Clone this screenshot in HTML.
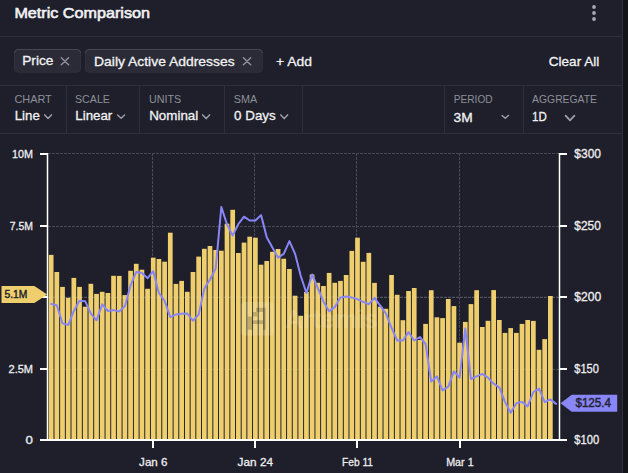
<!DOCTYPE html>
<html><head><meta charset="utf-8"><style>
html,body{margin:0;padding:0;background:#131418;width:628px;height:473px;overflow:hidden;}
svg{display:block;font-family:"Liberation Sans",sans-serif;}
</style></head><body>
<svg width="628" height="473" viewBox="0 0 628 473" font-family="Liberation Sans, sans-serif"><rect x="0" y="0" width="628" height="473" fill="#131418"/>
<rect x="0" y="0" width="622" height="473" fill="#1e1f2a"/>
<rect x="622" y="0" width="1" height="473" fill="#2e2e3c"/>
<text x="14.4" y="18" font-size="15" font-weight="normal" fill="#f2f2f4" text-anchor="start" textLength="135.6" lengthAdjust="spacingAndGlyphs" stroke="#f2f2f4" stroke-width="0.6">Metric Comparison</text>
<circle cx="594" cy="7" r="1.9" fill="#a5a7b1"/>
<circle cx="594" cy="13" r="1.9" fill="#a5a7b1"/>
<circle cx="594" cy="19" r="1.9" fill="#a5a7b1"/>
<rect x="0" y="36" width="622" height="1" fill="#2e2e3c"/>
<rect x="14.5" y="49.5" width="66.0" height="22.700000000000003" rx="3.5" fill="#2a2b36" stroke="#30313c" stroke-width="1"/><path d="M14.5 53.0 A3.5 3.5 0 0 1 18.0 49.5 H77.0 A3.5 3.5 0 0 1 80.5 53.0" fill="none" stroke="#464753" stroke-width="1"/>
<text x="22.2" y="65.2" font-size="13.5" font-weight="normal" fill="#f2f2f4" text-anchor="start" textLength="31.2" lengthAdjust="spacingAndGlyphs"  stroke="#f2f2f4" stroke-width="0.3">Price</text>
<path d="M61.3 57.7L68.6 64.7M68.6 57.7L61.3 64.7" stroke="#8f9099" stroke-width="1.5" stroke-linecap="round"/>
<rect x="85.5" y="49.5" width="176.8" height="22.700000000000003" rx="3.5" fill="#2a2b36" stroke="#30313c" stroke-width="1"/><path d="M85.5 53.0 A3.5 3.5 0 0 1 89.0 49.5 H258.8 A3.5 3.5 0 0 1 262.3 53.0" fill="none" stroke="#464753" stroke-width="1"/>
<text x="94.1" y="65.5" font-size="13.5" font-weight="normal" fill="#f2f2f4" text-anchor="start" textLength="140.5" lengthAdjust="spacingAndGlyphs"  stroke="#f2f2f4" stroke-width="0.3">Daily Active Addresses</text>
<path d="M243.4 57.7L250.7 64.7M250.7 57.7L243.4 64.7" stroke="#8f9099" stroke-width="1.5" stroke-linecap="round"/>
<text x="276" y="65.7" font-size="13.5" font-weight="normal" fill="#f2f2f4" text-anchor="start" textLength="36" lengthAdjust="spacingAndGlyphs"  stroke="#f2f2f4" stroke-width="0.3">+ Add</text>
<text x="548.8" y="65.8" font-size="13.5" font-weight="normal" fill="#f2f2f4" text-anchor="start" textLength="50.4" lengthAdjust="spacingAndGlyphs"  stroke="#f2f2f4" stroke-width="0.3">Clear All</text>
<rect x="0" y="85" width="622" height="1" fill="#2e2e3c"/>
<rect x="0" y="133" width="622" height="1" fill="#2e2e3c"/>
<rect x="66" y="86" width="1" height="47" fill="#2e2e3c"/>
<rect x="139" y="86" width="1" height="47" fill="#2e2e3c"/>
<rect x="224" y="86" width="1" height="47" fill="#2e2e3c"/>
<rect x="302" y="86" width="1" height="47" fill="#2e2e3c"/>
<rect x="444" y="86" width="1" height="47" fill="#2e2e3c"/>
<rect x="523" y="86" width="1" height="47" fill="#2e2e3c"/>
<text x="14.4" y="102.9" font-size="11" font-weight="normal" fill="#8d8f99" text-anchor="start" textLength="37.4" lengthAdjust="spacingAndGlyphs" >CHART</text>
<text x="14.700000000000001" y="119.9" font-size="13.5" font-weight="normal" fill="#f2f2f4" text-anchor="start" textLength="25.1" lengthAdjust="spacingAndGlyphs"  stroke="#f2f2f4" stroke-width="0.3">Line</text>
<polyline points="44.7,114.89999999999999 48.05,118.5 51.4,114.89999999999999" fill="none" stroke="#9c9da5" stroke-width="1.5" stroke-linecap="round" stroke-linejoin="round"/>
<text x="75.0" y="102.9" font-size="11" font-weight="normal" fill="#8d8f99" text-anchor="start" textLength="34.9" lengthAdjust="spacingAndGlyphs" >SCALE</text>
<text x="75.3" y="119.8" font-size="13.5" font-weight="normal" fill="#f2f2f4" text-anchor="start" textLength="37.0" lengthAdjust="spacingAndGlyphs"  stroke="#f2f2f4" stroke-width="0.3">Linear</text>
<polyline points="117.6,115.0 121.1,118.2 124.60000000000001,115.0" fill="none" stroke="#9c9da5" stroke-width="1.5" stroke-linecap="round" stroke-linejoin="round"/>
<text x="148.9" y="102.9" font-size="11" font-weight="normal" fill="#8d8f99" text-anchor="start" textLength="32.3" lengthAdjust="spacingAndGlyphs" >UNITS</text>
<text x="149.20000000000002" y="119.8" font-size="13.5" font-weight="normal" fill="#f2f2f4" text-anchor="start" textLength="49.1" lengthAdjust="spacingAndGlyphs"  stroke="#f2f2f4" stroke-width="0.3">Nominal</text>
<polyline points="202.7,114.89999999999999 206.14999999999998,118.60000000000001 209.6,114.89999999999999" fill="none" stroke="#9c9da5" stroke-width="1.5" stroke-linecap="round" stroke-linejoin="round"/>
<text x="233.8" y="102.9" font-size="11" font-weight="normal" fill="#8d8f99" text-anchor="start" textLength="23.4" lengthAdjust="spacingAndGlyphs" >SMA</text>
<text x="234.10000000000002" y="119.8" font-size="13.5" font-weight="normal" fill="#f2f2f4" text-anchor="start" textLength="41.6" lengthAdjust="spacingAndGlyphs"  stroke="#f2f2f4" stroke-width="0.3">0 Days</text>
<polyline points="280.8,114.89999999999999 284.2,118.60000000000001 287.59999999999997,114.89999999999999" fill="none" stroke="#9c9da5" stroke-width="1.5" stroke-linecap="round" stroke-linejoin="round"/>
<text x="453.8" y="102.8" font-size="11" font-weight="normal" fill="#8d8f99" text-anchor="start" textLength="38.8" lengthAdjust="spacingAndGlyphs" >PERIOD</text>
<text x="453.6" y="121.6" font-size="13.5" font-weight="normal" fill="#f2f2f4" text-anchor="start" textLength="19.1" lengthAdjust="spacingAndGlyphs"  stroke="#f2f2f4" stroke-width="0.3">3M</text>
<polyline points="502.1,115.5 505.25,118.30000000000001 508.4,115.5" fill="none" stroke="#9c9da5" stroke-width="1.5" stroke-linecap="round" stroke-linejoin="round"/>
<text x="532.1" y="102.9" font-size="11" font-weight="normal" fill="#8d8f99" text-anchor="start" textLength="64.9" lengthAdjust="spacingAndGlyphs" >AGGREGATE</text>
<text x="532.1" y="120.9" font-size="13.5" font-weight="normal" fill="#f2f2f4" text-anchor="start" textLength="14.7" lengthAdjust="spacingAndGlyphs"  stroke="#f2f2f4" stroke-width="0.3">1D</text>
<polyline points="565.6,115.6 570.0,120.30000000000001 574.4,115.6" fill="none" stroke="#9c9da5" stroke-width="1.8" stroke-linecap="round" stroke-linejoin="round"/>
<line x1="48" y1="153.5" x2="559" y2="153.5" stroke="#474957" stroke-width="1" stroke-dasharray="3 1"/>
<line x1="48" y1="226.5" x2="559" y2="226.5" stroke="#474957" stroke-width="1" stroke-dasharray="3 1"/>
<line x1="48" y1="297.5" x2="559" y2="297.5" stroke="#474957" stroke-width="1" stroke-dasharray="3 1"/>
<line x1="48" y1="369.5" x2="559" y2="369.5" stroke="#474957" stroke-width="1" stroke-dasharray="3 1"/>
<line x1="152.5" y1="153" x2="152.5" y2="439" stroke="#474957" stroke-width="1" stroke-dasharray="3 1"/>
<line x1="254.5" y1="153" x2="254.5" y2="439" stroke="#474957" stroke-width="1" stroke-dasharray="3 1"/>
<line x1="356.5" y1="153" x2="356.5" y2="439" stroke="#474957" stroke-width="1" stroke-dasharray="3 1"/>
<line x1="459.5" y1="153" x2="459.5" y2="439" stroke="#474957" stroke-width="1" stroke-dasharray="3 1"/>
<rect x="48.80" y="254.9" width="4.7" height="184.10" fill="#efcf6d"/>
<rect x="54.47" y="272" width="4.7" height="167.00" fill="#efcf6d"/>
<rect x="60.15" y="286.9" width="4.7" height="152.10" fill="#efcf6d"/>
<rect x="65.82" y="297.8" width="4.7" height="141.20" fill="#efcf6d"/>
<rect x="71.49" y="277.9" width="4.7" height="161.10" fill="#efcf6d"/>
<rect x="77.16" y="286.9" width="4.7" height="152.10" fill="#efcf6d"/>
<rect x="82.84" y="306.7" width="4.7" height="132.30" fill="#efcf6d"/>
<rect x="88.51" y="283.8" width="4.7" height="155.20" fill="#efcf6d"/>
<rect x="94.18" y="293.9" width="4.7" height="145.10" fill="#efcf6d"/>
<rect x="99.86" y="291.8" width="4.7" height="147.20" fill="#efcf6d"/>
<rect x="105.53" y="293" width="4.7" height="146.00" fill="#efcf6d"/>
<rect x="111.20" y="275.8" width="4.7" height="163.20" fill="#efcf6d"/>
<rect x="116.88" y="275.9" width="4.7" height="163.10" fill="#efcf6d"/>
<rect x="122.55" y="295.1" width="4.7" height="143.90" fill="#efcf6d"/>
<rect x="128.22" y="270.8" width="4.7" height="168.20" fill="#efcf6d"/>
<rect x="133.89" y="263.8" width="4.7" height="175.20" fill="#efcf6d"/>
<rect x="139.57" y="269.7" width="4.7" height="169.30" fill="#efcf6d"/>
<rect x="145.24" y="288.8" width="4.7" height="150.20" fill="#efcf6d"/>
<rect x="150.91" y="257.7" width="4.7" height="181.30" fill="#efcf6d"/>
<rect x="156.59" y="259" width="4.7" height="180.00" fill="#efcf6d"/>
<rect x="162.26" y="261.7" width="4.7" height="177.30" fill="#efcf6d"/>
<rect x="167.93" y="232.7" width="4.7" height="206.30" fill="#efcf6d"/>
<rect x="173.61" y="283.9" width="4.7" height="155.10" fill="#efcf6d"/>
<rect x="179.28" y="280.9" width="4.7" height="158.10" fill="#efcf6d"/>
<rect x="184.95" y="291.8" width="4.7" height="147.20" fill="#efcf6d"/>
<rect x="190.62" y="272" width="4.7" height="167.00" fill="#efcf6d"/>
<rect x="196.30" y="256.6" width="4.7" height="182.40" fill="#efcf6d"/>
<rect x="201.97" y="248.8" width="4.7" height="190.20" fill="#efcf6d"/>
<rect x="207.64" y="246" width="4.7" height="193.00" fill="#efcf6d"/>
<rect x="213.32" y="250" width="4.7" height="189.00" fill="#efcf6d"/>
<rect x="218.99" y="250.7" width="4.7" height="188.30" fill="#efcf6d"/>
<rect x="224.66" y="223.7" width="4.7" height="215.30" fill="#efcf6d"/>
<rect x="230.34" y="209.8" width="4.7" height="229.20" fill="#efcf6d"/>
<rect x="236.01" y="253" width="4.7" height="186.00" fill="#efcf6d"/>
<rect x="241.68" y="242.6" width="4.7" height="196.40" fill="#efcf6d"/>
<rect x="247.36" y="236.7" width="4.7" height="202.30" fill="#efcf6d"/>
<rect x="253.03" y="237.7" width="4.7" height="201.30" fill="#efcf6d"/>
<rect x="258.70" y="264.7" width="4.7" height="174.30" fill="#efcf6d"/>
<rect x="264.37" y="261" width="4.7" height="178.00" fill="#efcf6d"/>
<rect x="270.05" y="251.8" width="4.7" height="187.20" fill="#efcf6d"/>
<rect x="275.72" y="249" width="4.7" height="190.00" fill="#efcf6d"/>
<rect x="281.39" y="258.7" width="4.7" height="180.30" fill="#efcf6d"/>
<rect x="287.07" y="269" width="4.7" height="170.00" fill="#efcf6d"/>
<rect x="292.74" y="295.7" width="4.7" height="143.30" fill="#efcf6d"/>
<rect x="298.41" y="315.8" width="4.7" height="123.20" fill="#efcf6d"/>
<rect x="304.08" y="291.9" width="4.7" height="147.10" fill="#efcf6d"/>
<rect x="309.76" y="274.5" width="4.7" height="164.50" fill="#efcf6d"/>
<rect x="315.43" y="282.8" width="4.7" height="156.20" fill="#efcf6d"/>
<rect x="321.10" y="286" width="4.7" height="153.00" fill="#efcf6d"/>
<rect x="326.78" y="272.9" width="4.7" height="166.10" fill="#efcf6d"/>
<rect x="332.45" y="282.8" width="4.7" height="156.20" fill="#efcf6d"/>
<rect x="338.12" y="280.9" width="4.7" height="158.10" fill="#efcf6d"/>
<rect x="343.80" y="275" width="4.7" height="164.00" fill="#efcf6d"/>
<rect x="349.47" y="250.9" width="4.7" height="188.10" fill="#efcf6d"/>
<rect x="355.14" y="237.7" width="4.7" height="201.30" fill="#efcf6d"/>
<rect x="360.81" y="261.8" width="4.7" height="177.20" fill="#efcf6d"/>
<rect x="366.49" y="252.9" width="4.7" height="186.10" fill="#efcf6d"/>
<rect x="372.16" y="282.9" width="4.7" height="156.10" fill="#efcf6d"/>
<rect x="377.83" y="306.7" width="4.7" height="132.30" fill="#efcf6d"/>
<rect x="383.51" y="308.8" width="4.7" height="130.20" fill="#efcf6d"/>
<rect x="389.18" y="275" width="4.7" height="164.00" fill="#efcf6d"/>
<rect x="394.85" y="294.8" width="4.7" height="144.20" fill="#efcf6d"/>
<rect x="400.53" y="320.2" width="4.7" height="118.80" fill="#efcf6d"/>
<rect x="406.20" y="291" width="4.7" height="148.00" fill="#efcf6d"/>
<rect x="411.87" y="288" width="4.7" height="151.00" fill="#efcf6d"/>
<rect x="417.55" y="340" width="4.7" height="99.00" fill="#efcf6d"/>
<rect x="423.22" y="323.9" width="4.7" height="115.10" fill="#efcf6d"/>
<rect x="428.89" y="290.2" width="4.7" height="148.80" fill="#efcf6d"/>
<rect x="434.56" y="317.3" width="4.7" height="121.70" fill="#efcf6d"/>
<rect x="440.24" y="318.1" width="4.7" height="120.90" fill="#efcf6d"/>
<rect x="445.91" y="299" width="4.7" height="140.00" fill="#efcf6d"/>
<rect x="451.58" y="306.1" width="4.7" height="132.90" fill="#efcf6d"/>
<rect x="457.26" y="342.7" width="4.7" height="96.30" fill="#efcf6d"/>
<rect x="462.93" y="321.9" width="4.7" height="117.10" fill="#efcf6d"/>
<rect x="468.60" y="304.1" width="4.7" height="134.90" fill="#efcf6d"/>
<rect x="474.28" y="290.2" width="4.7" height="148.80" fill="#efcf6d"/>
<rect x="479.95" y="327" width="4.7" height="112.00" fill="#efcf6d"/>
<rect x="485.62" y="320.8" width="4.7" height="118.20" fill="#efcf6d"/>
<rect x="491.29" y="290.1" width="4.7" height="148.90" fill="#efcf6d"/>
<rect x="496.97" y="320" width="4.7" height="119.00" fill="#efcf6d"/>
<rect x="502.64" y="332.9" width="4.7" height="106.10" fill="#efcf6d"/>
<rect x="508.31" y="328.1" width="4.7" height="110.90" fill="#efcf6d"/>
<rect x="513.99" y="332.9" width="4.7" height="106.10" fill="#efcf6d"/>
<rect x="519.66" y="323.9" width="4.7" height="115.10" fill="#efcf6d"/>
<rect x="525.33" y="320" width="4.7" height="119.00" fill="#efcf6d"/>
<rect x="531.00" y="320.9" width="4.7" height="118.10" fill="#efcf6d"/>
<rect x="536.68" y="349.8" width="4.7" height="89.20" fill="#efcf6d"/>
<rect x="542.35" y="339.1" width="4.7" height="99.90" fill="#efcf6d"/>
<rect x="548.02" y="296" width="4.7" height="143.00" fill="#efcf6d"/>
<rect x="241" y="302" width="32.5" height="33.5" rx="3.5" fill="#ffffff" opacity="0.15"/>
<path d="M247.7 316.6h4.7v13.2h-4.7z M252.4 311.9h4.8v4.7h-4.8z M256.1 307.7h9.5v4.2h-9.5z M263 307.7h2.7v22.1h-2.7z M252.4 320.3h10.6v3.7h-10.6z" fill="#000" opacity="0.2"/>
<text x="285" y="328.2" font-size="26.5" font-weight="bold" fill="#ffffff" opacity="0.14" textLength="93" lengthAdjust="spacingAndGlyphs">Artemis</text>
<line x1="48" y1="297" x2="559" y2="297" stroke="#ffffff" stroke-opacity="0.12" stroke-width="1" stroke-dasharray="3 1"/>
<polyline points="51.15,304 56.82,305.3 62.50,323.4 68.17,325 73.84,311 79.51,300.8 85.19,301.2 90.86,313.6 96.53,320.3 102.21,304.3 107.88,311 113.55,310.1 119.23,311.5 124.90,306 130.57,285.4 136.24,271.9 141.92,272.9 147.59,278.2 153.26,271.2 158.94,293 164.61,300.8 170.28,317.1 175.96,314.6 181.63,313.8 187.30,313.5 192.97,320.7 198.65,314.6 204.32,288.5 209.99,279.5 215.67,268.5 221.34,207 227.01,224.4 232.69,235.6 238.36,224 244.03,216.7 249.71,220.5 255.38,220.5 261.05,215.1 266.72,237.2 272.40,247.6 278.07,257.6 283.74,253.8 289.42,241.1 295.09,253.8 300.76,276 306.44,293 312.11,274.5 317.78,288 323.45,301.4 329.13,311.3 334.80,307.1 340.47,297.6 346.15,296.5 351.82,297.6 357.49,299.1 363.17,301.9 368.84,304.2 374.51,297.8 380.18,305.7 385.86,313.3 391.53,327.8 397.20,340.5 402.88,340.5 408.55,332.1 414.22,340.5 419.90,337 425.57,344 431.24,381.5 436.91,376.4 442.59,390.4 448.26,386.6 453.93,371.4 459.61,377.7 465.28,328.5 470.95,379 476.63,376.4 482.30,373.9 487.97,377.6 493.64,383.7 499.32,387.3 504.99,401.9 510.66,412.8 516.34,403.2 522.01,401.9 527.68,406.4 533.36,392 539.03,388.6 544.70,402.2 550.37,399.4 556.05,403.9" fill="none" stroke="#8986f8" stroke-width="2" stroke-linejoin="round" stroke-linecap="round"/>
<rect x="46.75" y="153" width="1.5" height="288" fill="#ffffff"/>
<rect x="558.75" y="153" width="1.5" height="288" fill="#ffffff"/>
<rect x="40" y="439" width="527" height="2" fill="#ffffff"/>
<rect x="40" y="153" width="8" height="2" fill="#ffffff"/>
<rect x="559" y="153" width="8" height="2" fill="#ffffff"/>
<rect x="40" y="225" width="8" height="2" fill="#ffffff"/>
<rect x="559" y="225" width="8" height="2" fill="#ffffff"/>
<rect x="40" y="296" width="8" height="2" fill="#ffffff"/>
<rect x="559" y="296" width="8" height="2" fill="#ffffff"/>
<rect x="40" y="368" width="8" height="2" fill="#ffffff"/>
<rect x="559" y="368" width="8" height="2" fill="#ffffff"/>
<rect x="152" y="441" width="2" height="7" fill="#ffffff"/>
<rect x="254" y="441" width="2" height="7" fill="#ffffff"/>
<rect x="356" y="441" width="2" height="7" fill="#ffffff"/>
<rect x="459" y="441" width="2" height="7" fill="#ffffff"/>
<text x="33" y="158" font-size="11" font-weight="normal" fill="#eeeef0" text-anchor="end" textLength="20.9" lengthAdjust="spacingAndGlyphs"  stroke="#eeeef0" stroke-width="0.3">10M</text>
<text x="33" y="230" font-size="11" font-weight="normal" fill="#eeeef0" text-anchor="end" textLength="23.2" lengthAdjust="spacingAndGlyphs"  stroke="#eeeef0" stroke-width="0.3">7.5M</text>
<text x="33" y="373" font-size="11" font-weight="normal" fill="#eeeef0" text-anchor="end" textLength="24.5" lengthAdjust="spacingAndGlyphs"  stroke="#eeeef0" stroke-width="0.3">2.5M</text>
<text x="33" y="444" font-size="11" font-weight="normal" fill="#eeeef0" text-anchor="end" textLength="7.4" lengthAdjust="spacingAndGlyphs"  stroke="#eeeef0" stroke-width="0.3">0</text>
<text x="574.3" y="157.9" font-size="12" font-weight="normal" fill="#eeeef0" text-anchor="start" textLength="26.7" lengthAdjust="spacingAndGlyphs"  stroke="#eeeef0" stroke-width="0.3">$300</text>
<text x="574.3" y="229.9" font-size="12" font-weight="normal" fill="#eeeef0" text-anchor="start" textLength="26.6" lengthAdjust="spacingAndGlyphs"  stroke="#eeeef0" stroke-width="0.3">$250</text>
<text x="574.3" y="300.9" font-size="12" font-weight="normal" fill="#eeeef0" text-anchor="start" textLength="27" lengthAdjust="spacingAndGlyphs"  stroke="#eeeef0" stroke-width="0.3">$200</text>
<text x="574.3" y="372.9" font-size="12" font-weight="normal" fill="#eeeef0" text-anchor="start" textLength="24.6" lengthAdjust="spacingAndGlyphs"  stroke="#eeeef0" stroke-width="0.3">$150</text>
<text x="574.3" y="443.9" font-size="12" font-weight="normal" fill="#eeeef0" text-anchor="start" textLength="24.9" lengthAdjust="spacingAndGlyphs"  stroke="#eeeef0" stroke-width="0.3">$100</text>
<text x="139.1" y="465.8" font-size="11.5" font-weight="normal" fill="#eeeef0" text-anchor="start" textLength="28.3" lengthAdjust="spacingAndGlyphs"  stroke="#eeeef0" stroke-width="0.3">Jan 6</text>
<text x="237.60000000000002" y="465.8" font-size="11.5" font-weight="normal" fill="#eeeef0" text-anchor="start" textLength="35.4" lengthAdjust="spacingAndGlyphs"  stroke="#eeeef0" stroke-width="0.3">Jan 24</text>
<text x="342.0" y="465.8" font-size="11.5" font-weight="normal" fill="#eeeef0" text-anchor="start" textLength="31" lengthAdjust="spacingAndGlyphs"  stroke="#eeeef0" stroke-width="0.3">Feb 11</text>
<text x="446.15" y="465.8" font-size="11.5" font-weight="normal" fill="#eeeef0" text-anchor="start" textLength="27.5" lengthAdjust="spacingAndGlyphs"  stroke="#eeeef0" stroke-width="0.3">Mar 1</text>
<path d="M1.5 286 H34.4 L47.2 294.6 L34.4 303 H1.5 Z" fill="#efcf6d"/>
<text x="4.5" y="297.8" font-size="11.5" font-weight="normal" fill="#22232c" text-anchor="start" textLength="22.9" lengthAdjust="spacingAndGlyphs" stroke="#22232c" stroke-width="0.45">5.1M</text>
<path d="M560.5 403.2 L571.7 394.7 H617.2 V411.7 H571.7 Z" fill="#8986f8"/>
<text x="575.4" y="407" font-size="12.5" font-weight="normal" fill="#23232f" text-anchor="start" textLength="35.7" lengthAdjust="spacingAndGlyphs" stroke="#23232f" stroke-width="0.45">$125.4</text></svg>
</body></html>
